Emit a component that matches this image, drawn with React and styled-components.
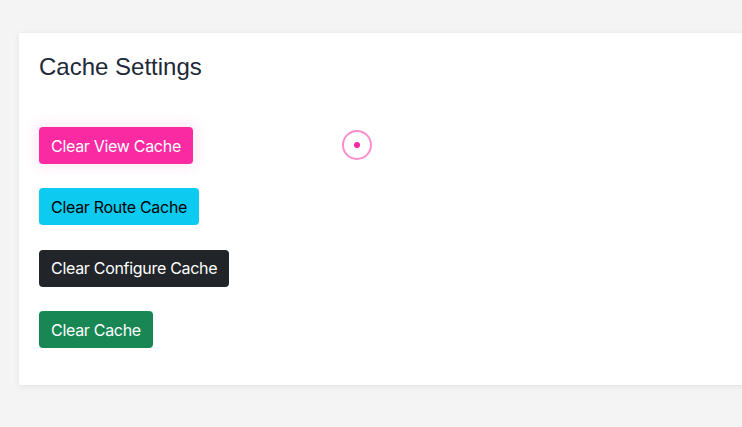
import React from "react"
import styled, { createGlobalStyle } from "styled-components"

const GlobalStyle = createGlobalStyle`
  html, body {
    margin: 0;
    padding: 0;
    background: #f4f4f4;
    overflow: hidden;
  }
`

const Page = styled.div`
  padding: 33px 0 0 19px;
  min-height: 427px;
  box-sizing: border-box;
  overflow: hidden;
`

const Card = styled.div`
  position: relative;
  width: 760px;
  background: white;
  box-shadow: 0 1px 6px rgba(0, 0, 0, 0.08);
  padding: 20px 20px 37px 20px;
  box-sizing: border-box;
`

const Title = styled.h2`
  margin: 0 0 46px 0;
  font-family: "Liberation Sans", Arial, sans-serif;
  font-weight: 400;
  font-size: 24px;
  line-height: 28px;
  color: #212837;
`

const ButtonList = styled.div`
  display: flex;
  flex-direction: column;
  align-items: flex-start;
  gap: 24.4px;
`

const Button = styled.button`
  font-family: "Inter", sans-serif;
  font-size: 16px;
  font-weight: 400;
  letter-spacing: -0.3px;
  height: 37px;
  padding: 0 12px;
  border: none;
  border-radius: 4px;
  cursor: pointer;
  background: ${p => p.bg};
  color: ${p => p.fg || "white"};
  box-shadow: ${p => (p.focused ? "0 0 12px 5px rgba(250, 43, 163, 0.08)" : "none")};
`

const Cursor = styled.div`
  position: absolute;
  left: 323px;
  top: 97px;
  width: 26px;
  height: 26px;
  border: 2px solid #fb8fcd;
  border-radius: 50%;
  display: flex;
  align-items: center;
  justify-content: center;
  &::after {
    content: "";
    width: 6px;
    height: 6px;
    border-radius: 50%;
    background: #f72aa5;
  }
`

export default function App() {
  return (
    <Page>
      <GlobalStyle />
      <Card>
        <Title>Cache Settings</Title>
        <ButtonList>
          <Button bg="#fa2aa3" focused>Clear View Cache</Button>
          <Button bg="#0dcaf0" fg="#000">Clear Route Cache</Button>
          <Button bg="#212529">Clear Configure Cache</Button>
          <Button bg="#198754">Clear Cache</Button>
        </ButtonList>
        <Cursor />
      </Card>
    </Page>
  )
}
